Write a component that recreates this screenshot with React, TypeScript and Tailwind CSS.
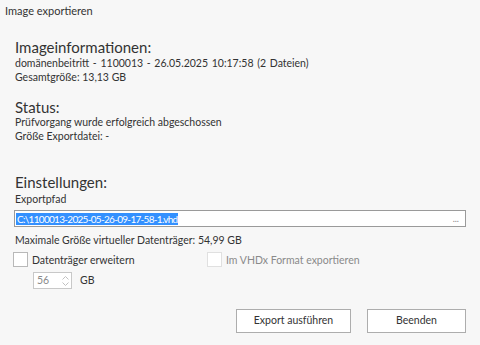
import React from 'react';

const font = { fontFamily: 'Lato, "Open Sans", sans-serif' };

const Heading: React.FC<{ children: React.ReactNode }> = ({ children }) => (
  <div className="text-[15px] leading-[18px] text-[#333]">{children}</div>
);

const Line: React.FC<{ children: React.ReactNode; className?: string }> = ({ children, className }) => (
  <div className={`text-[10.5px] leading-[14px] text-[#333] ${className ?? ''}`}>{children}</div>
);

const Checkbox: React.FC<{ label: string; disabled?: boolean }> = ({ label, disabled }) => (
  <label className="flex items-center gap-[4px]">
    <span className={`w-[15px] h-[15px] border bg-white ${disabled ? 'border-[#e0e0e0]' : 'border-[#b8b8b8]'}`} />
    <span className={`text-[10.5px] leading-[14px] ${disabled ? 'text-[#8a8a8a]' : 'text-[#333]'}`}>{label}</span>
  </label>
);

export default function App() {
  return (
    <div className="w-[480px] h-[345px] bg-[#f7f7f7] flex flex-col" style={font}>
      <div className="pl-[5px] pt-[4px] text-[11px] leading-[14px] text-[#333]">Image exportieren</div>

      <div className="pl-[15px] pr-[14px] flex flex-col">
        <div className="mt-[20px]">
          <Heading>Imageinformationen:</Heading>
          <Line className="[word-spacing:1px]">domänenbeitritt - 1100013 - 26.05.2025 10:17:58 (2 Dateien)</Line>
          <Line>Gesamtgröße: 13,13 GB</Line>
        </div>

        <div className="mt-[14px]">
          <Heading>Status:</Heading>
          <Line className="-mt-[1px]">Prüfvorgang wurde erfolgreich abgeschossen</Line>
          <Line>Größe Exportdatei: -</Line>
        </div>

        <div className="mt-[30px]">
          <Heading>Einstellungen:</Heading>
          <Line className="mt-[1px]">Exportpfad</Line>
          <div className="mt-[4px] -ml-[1px] h-[17px] border border-[#9a9a9a] bg-white flex items-center pl-[1px] pr-[6px]">
            <span className="bg-[#3390ff] text-white text-[10px] leading-[12px] px-[1px] tracking-[-0.7px]">
              C:\1100013-2025-05-26-09-17-58-1.vhd
            </span>
            <span className="ml-auto text-[9px] text-[#888] leading-none">...</span>
          </div>
          <Line className="mt-[6px]">Maximale Größe virtueller Datenträger: 54,99 GB</Line>

          <div className="mt-[5px] -ml-[2px] flex items-center">
            <div className="w-[194px]">
              <Checkbox label="Datenträger erweitern" />
            </div>
            <Checkbox label="Im VHDx Format exportieren" disabled />
          </div>

          <div className="mt-[5px] ml-[18px] flex items-center gap-[8px]">
            <div className="w-[39px] h-[17px] border border-[#c8c8c8] bg-white flex items-center pl-[3px] pr-[2px]">
              <span className="text-[10.5px] text-[#8a8a8a] leading-none">56</span>
              <span className="ml-auto flex flex-col gap-[2px] text-[#c0c0c0]">
                <svg width="7" height="4" viewBox="0 0 7 4"><path d="M0.5 3.5 L3.5 0.5 L6.5 3.5" fill="none" stroke="currentColor" /></svg>
                <svg width="7" height="4" viewBox="0 0 7 4"><path d="M0.5 0.5 L3.5 3.5 L6.5 0.5" fill="none" stroke="currentColor" /></svg>
              </span>
            </div>
            <span className="text-[10.5px] text-[#333]">GB</span>
          </div>
        </div>

        <div className="mt-[20px] flex justify-end gap-[16px]">
          <button className="w-[115px] h-[24px] border border-[#adadad] bg-white text-[10.5px] text-[#333]">
            Export ausführen
          </button>
          <button className="w-[99px] h-[24px] border border-[#adadad] bg-white text-[10.5px] text-[#333]">
            Beenden
          </button>
        </div>
      </div>
    </div>
  );
}
